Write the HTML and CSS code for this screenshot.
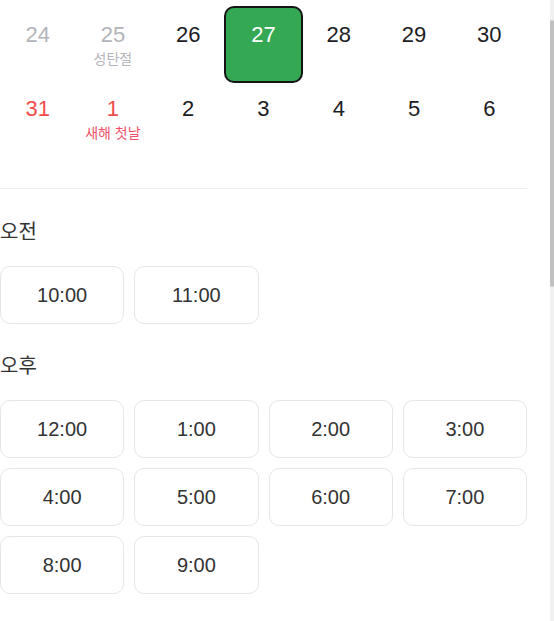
FILE: index.html
```html
<!DOCTYPE html>
<html lang="ko">
<head>
  <meta charset="UTF-8">
  <meta name="viewport" content="width=device-width, initial-scale=1.0">
  <title>예약 시간 선택</title>
  <link rel="stylesheet" href="styles.css">
</head>
<body>
  <div class="booking">
    <div class="calendar">
      <div class="day muted"><span class="num">24</span></div>
      <div class="day muted"><span class="num">25</span><span class="holiday">성탄절</span></div>
      <div class="day"><span class="num">26</span></div>
      <div class="day selected"><span class="num">27</span></div>
      <div class="day"><span class="num">28</span></div>
      <div class="day"><span class="num">29</span></div>
      <div class="day"><span class="num">30</span></div>

      <div class="day sunday"><span class="num">31</span></div>
      <div class="day sunday"><span class="num">1</span><span class="holiday">새해 첫날</span></div>
      <div class="day"><span class="num">2</span></div>
      <div class="day"><span class="num">3</span></div>
      <div class="day"><span class="num">4</span></div>
      <div class="day"><span class="num">5</span></div>
      <div class="day"><span class="num">6</span></div>
    </div>

    <div class="times">
      <h3 class="period">오전</h3>
      <div class="slots">
        <button class="slot">10:00</button>
        <button class="slot">11:00</button>
      </div>

      <h3 class="period">오후</h3>
      <div class="slots">
        <button class="slot">12:00</button>
        <button class="slot">1:00</button>
        <button class="slot">2:00</button>
        <button class="slot">3:00</button>
        <button class="slot">4:00</button>
        <button class="slot">5:00</button>
        <button class="slot">6:00</button>
        <button class="slot">7:00</button>
        <button class="slot">8:00</button>
        <button class="slot">9:00</button>
      </div>
    </div>
  </div>

  <!-- 스크롤바 -->
  <div class="scrollbar"><div class="thumb"></div></div>
</body>
</html>
```

FILE: styles.css
```css
body {
  margin: 0;
  font-family: "Liberation Sans", Arial, "Noto Sans CJK KR", sans-serif;
  background-color: #fff;
  color: #222;
}
.booking {
  width: 527px;
}
.calendar {
  display: grid;
  grid-template-columns: repeat(7, 1fr);
  grid-auto-rows: 74px;
  padding: 6px 0 34px;
  border-bottom: 1px solid #eee;
}
.day {
  display: flex;
  flex-direction: column;
  align-items: center;
  padding-top: 16px;
  font-size: 22px;
  color: #1c1c24;
}
.day .num {
  line-height: 25px;
}
.day .holiday {
  margin-top: 3px;
  font-size: 14px;
  line-height: 16px;
  font-family: "Noto Sans CJK KR", sans-serif;
}
.day.muted {
  color: #b3b4b9;
}
.day.sunday {
  color: #f24b4b;
}
.day.sunday .holiday {
  color: #f0506a;
}
.day.selected {
  margin: 0 -2px -3px;
  padding-top: 14px;
  background-color: #34a853;
  border: 2px solid #141414;
  border-radius: 10px;
  color: #fff;
}
.times {
  padding-top: 29px;
}
.period {
  margin: 0 0 22px;
  font-family: "Noto Sans CJK KR", sans-serif;
  font-size: 20px;
  font-weight: normal;
  line-height: 26px;
  color: #333;
}
.slots {
  display: grid;
  grid-template-columns: repeat(4, 1fr);
  gap: 10px;
  margin-bottom: 28px;
}
.slot {
  height: 58px;
  background-color: #fff;
  border: 1px solid #e6e6e6;
  border-radius: 10px;
  font-family: "Liberation Sans", Arial, sans-serif;
  font-size: 20px;
  color: #333;
  cursor: pointer;
}
.scrollbar {
  position: fixed;
  top: 0;
  right: 0;
  width: 4px;
  height: 100%;
  background-color: #f1f1f1;
}
.scrollbar .thumb {
  margin-top: 20px;
  height: 267px;
  background-color: #c1c1c1;
  border-radius: 2px;
}
```
